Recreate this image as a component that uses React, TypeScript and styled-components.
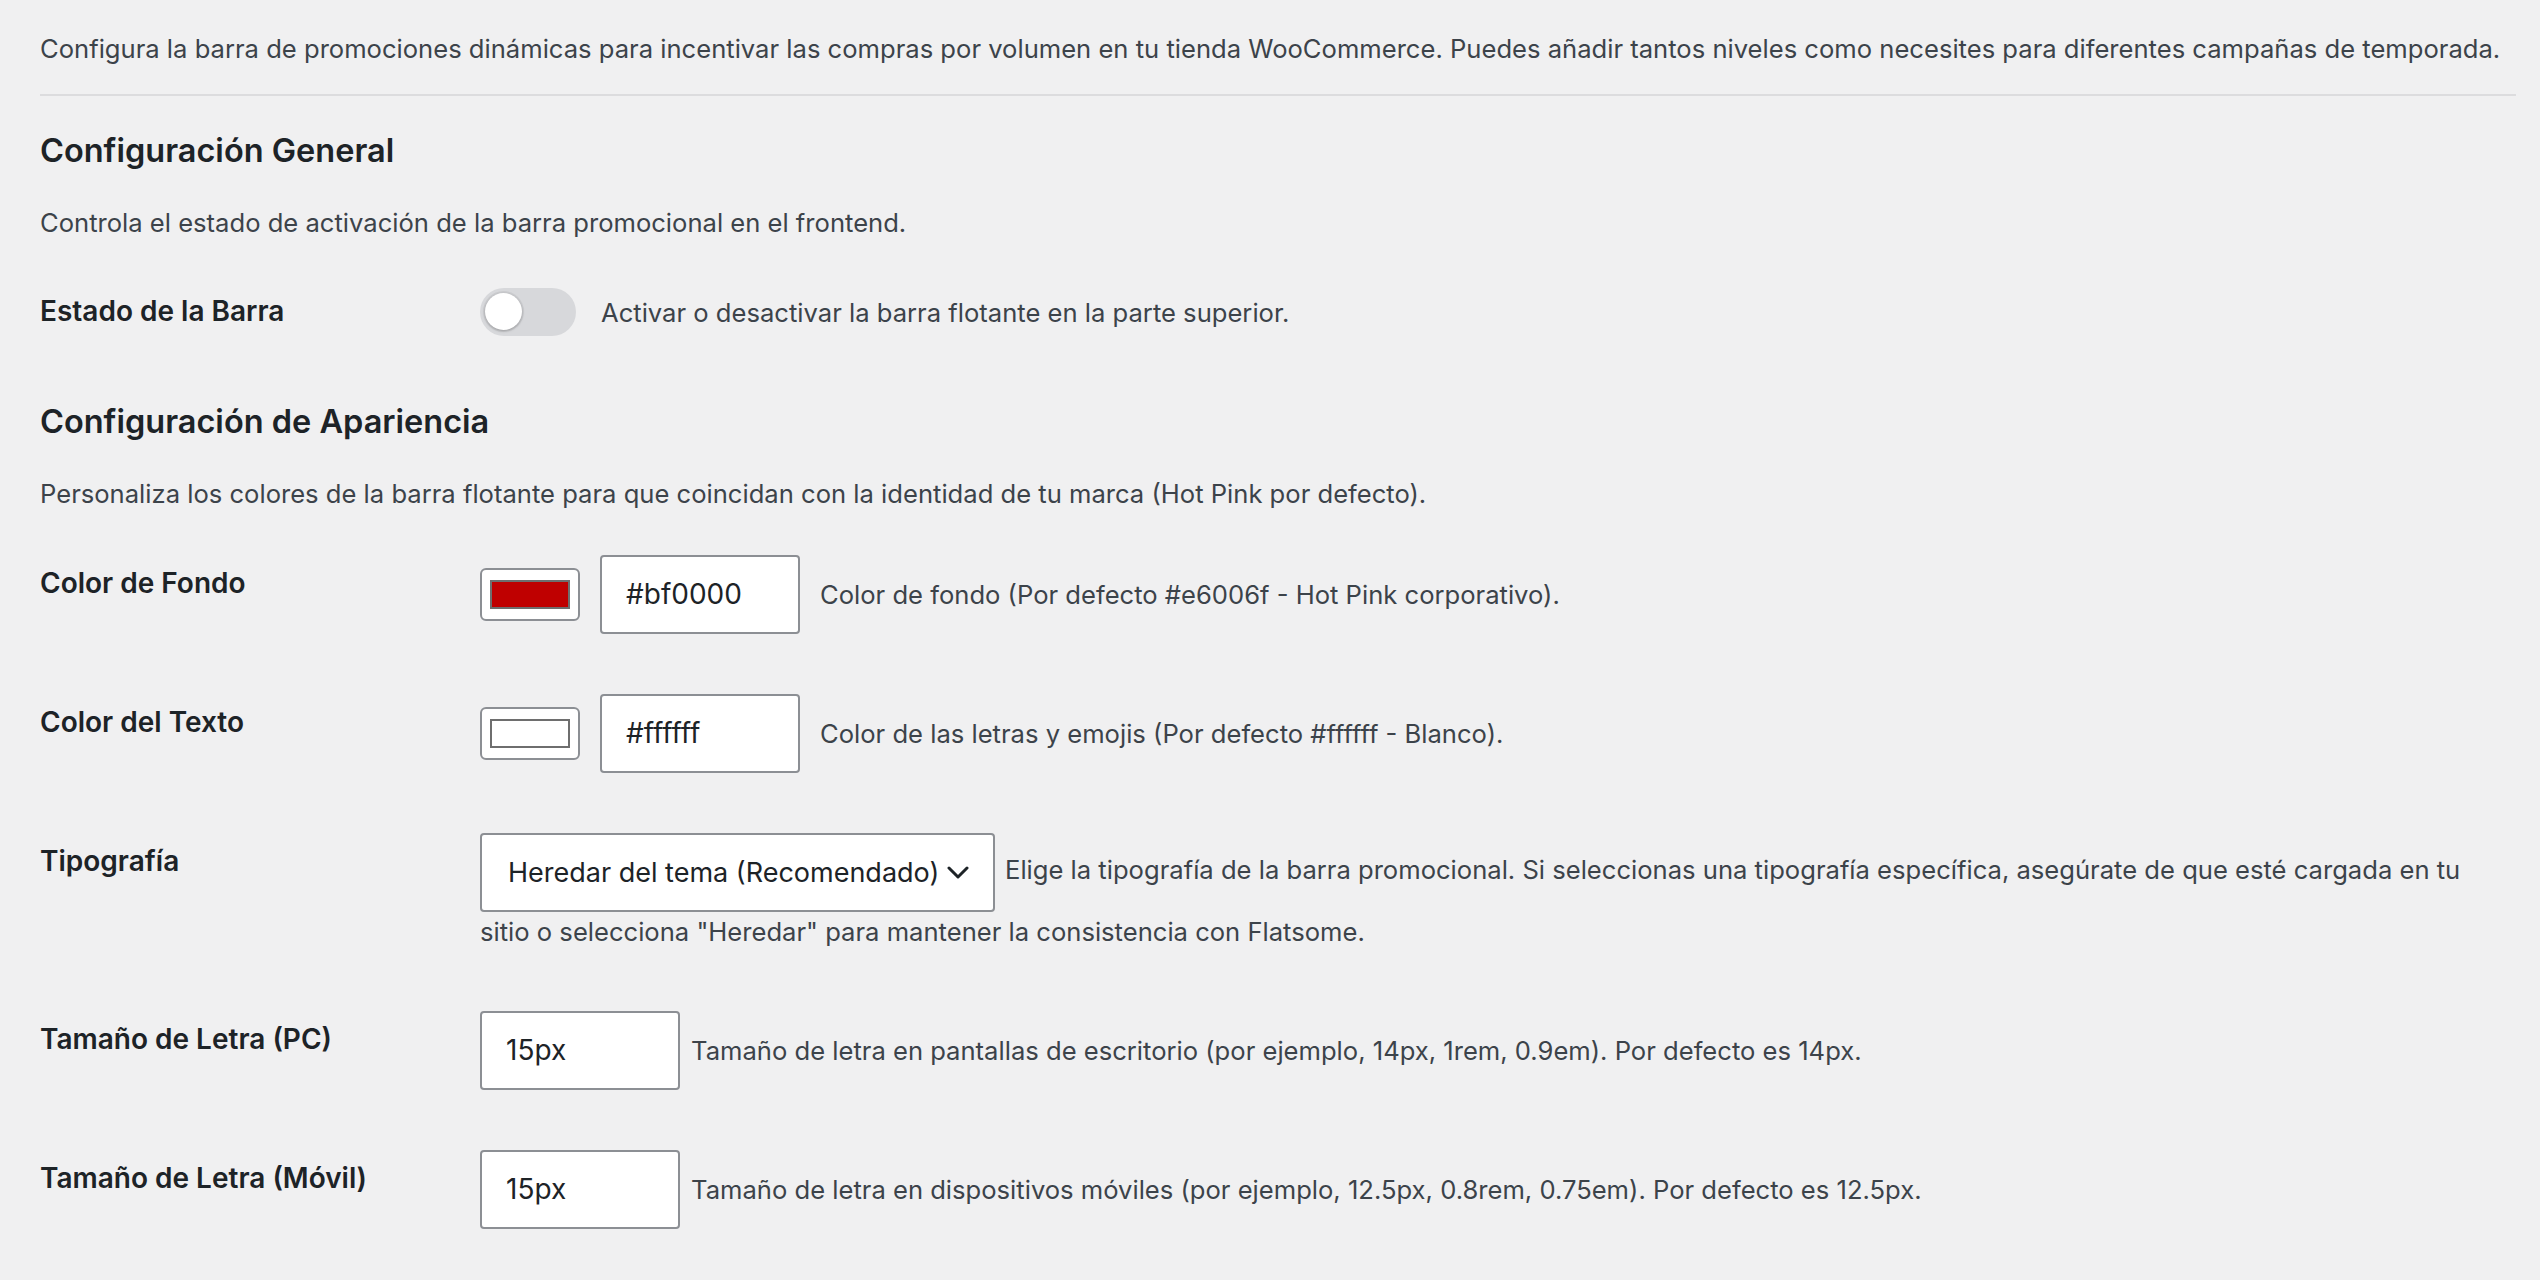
import React from 'react';
import styled, { createGlobalStyle } from 'styled-components';

const GlobalStyle = createGlobalStyle`
  html, body {
    margin: 0;
    padding: 0;
    background: #f0f0f1;
  }
  body {
    font-family: Inter, "Noto Sans", "Liberation Sans", sans-serif;
    color: #3c434a;
    font-size: 25.6px;
  }
  * {
    box-sizing: border-box;
  }
`;

const Page = styled.div`
  padding: 29px 24px 40px 40px;
`;

const Intro = styled.p`
  margin: 0;
  font-size: 25.6px;
  line-height: 39px;
  white-space: nowrap;
`;

const Divider = styled.hr`
  margin: 26px 0 0;
  border: 0;
  border-top: 2px solid #dcdcde;
`;

const SectionTitle = styled.h2<{ $top: number }>`
  margin: ${p => p.$top}px 0 0;
  font-size: 32.5px;
  line-height: 44px;
  font-weight: 600;
  color: #1d2327;
`;

const SectionText = styled.p`
  margin: 30px 0 0;
  font-size: 25.6px;
  line-height: 39px;
`;

const FormTable = styled.div<{ $top: number }>`
  margin-top: ${p => p.$top}px;
  display: grid;
  grid-template-columns: 420px 1fr;
`;

const Label = styled.div`
  padding: 40px 20px 40px 0;
  font-size: 28px;
  line-height: 36px;
  font-weight: 600;
  color: #1d2327;
`;

const Cell = styled.div<{ $padTop?: number }>`
  padding: ${p => p.$padTop ?? 30}px 20px 30px;
  font-size: 25.6px;
  line-height: 39px;
`;

const Inline = styled.div<{ $gap: number }>`
  display: flex;
  align-items: center;
  gap: ${p => p.$gap}px;
`;

const Toggle = styled.span<{ $on?: boolean }>`
  position: relative;
  flex: none;
  width: 96px;
  height: 48px;
  border-radius: 24px;
  background: ${p => (p.$on ? '#2271b1' : '#d7d8db')};

  &::after {
    content: '';
    position: absolute;
    top: 5px;
    left: ${p => (p.$on ? '54px' : '5px')};
    width: 37px;
    height: 37px;
    border-radius: 50%;
    background: #fff;
    box-shadow: 0 0 0 2px rgba(0, 0, 0, 0.05), 0 1px 3px rgba(0, 0, 0, 0.25);
  }
`;

const Swatch = styled.span`
  flex: none;
  width: 100px;
  height: 53px;
  padding: 10px 8px;
  border: 2px solid #8c8f94;
  border-radius: 6px;
  background: #fff;
`;

const SwatchFill = styled.span<{ $color: string }>`
  display: block;
  width: 100%;
  height: 100%;
  border: 2px solid #6e6e6e;
  background: ${p => p.$color};
`;

const TextBox = styled.span`
  flex: none;
  display: inline-flex;
  align-items: center;
  width: 200px;
  height: 79px;
  padding: 0 24px;
  border: 2px solid #8c8f94;
  border-radius: 4px;
  background: #fff;
  color: #1d2327;
  font-size: 28px;
`;

const SelectBox = styled.span`
  display: inline-flex;
  align-items: center;
  gap: 8px;
  vertical-align: middle;
  width: 515px;
  height: 79px;
  margin-right: 10px;
  padding: 0 0 0 26px;
  border: 2px solid #8c8f94;
  border-radius: 4px;
  background: #fff;
  color: #1d2327;
  font-size: 27px;
  line-height: 1;
  white-space: nowrap;
`;

const Chevron = () => (
  <svg width="22" height="13" viewBox="0 0 22 13" fill="none">
    <path d="M2 2l9 9 9-9" stroke="#1d2327" strokeWidth="3" strokeLinecap="round" strokeLinejoin="round" />
  </svg>
);

const ColorField = ({ color, value, hint }: { color: string; value: string; hint: string }) => (
  <Inline $gap={20}>
    <Swatch>
      <SwatchFill $color={color} />
    </Swatch>
    <TextBox>{value}</TextBox>
    <span>{hint}</span>
  </Inline>
);

const App: React.FC = () => (
  <>
    <GlobalStyle />
    <Page>
      <Intro>
        Configura la barra de promociones dinámicas para incentivar las compras por volumen en tu tienda WooCommerce. Puedes añadir tantos niveles como necesites para diferentes campañas de temporada.
      </Intro>
      <Divider />

      <SectionTitle $top={33}>Configuración General</SectionTitle>
      <SectionText>Controla el estado de activación de la barra promocional en el frontend.</SectionText>
      <FormTable $top={11}>
        <Label>Estado de la Barra</Label>
        <Cell $padTop={35}>
          <Inline $gap={25}>
            <Toggle />
            <span>Activar o desactivar la barra flotante en la parte superior.</span>
          </Inline>
        </Cell>
      </FormTable>

      <SectionTitle $top={31}>Configuración de Apariencia</SectionTitle>
      <SectionText>
        Personaliza los colores de la barra flotante para que coincidan con la identidad de tu marca (Hot Pink por defecto).
      </SectionText>
      <FormTable $top={12}>
        <Label>Color de Fondo</Label>
        <Cell>
          <ColorField color="#bf0000" value="#bf0000" hint="Color de fondo (Por defecto #e6006f - Hot Pink corporativo)." />
        </Cell>

        <Label>Color del Texto</Label>
        <Cell>
          <ColorField color="#ffffff" value="#ffffff" hint="Color de las letras y emojis (Por defecto #ffffff - Blanco)." />
        </Cell>

        <Label>Tipografía</Label>
        <Cell>
          <SelectBox>
            <span>Heredar del tema (Recomendado)</span>
            <Chevron />
          </SelectBox>
          Elige la tipografía de la barra promocional. Si seleccionas una tipografía específica, asegúrate de que esté cargada en tu sitio o selecciona "Heredar" para mantener la consistencia con Flatsome.
        </Cell>

        <Label>Tamaño de Letra (PC)</Label>
        <Cell>
          <Inline $gap={11}>
            <TextBox>15px</TextBox>
            <span>Tamaño de letra en pantallas de escritorio (por ejemplo, 14px, 1rem, 0.9em). Por defecto es 14px.</span>
          </Inline>
        </Cell>

        <Label>Tamaño de Letra (Móvil)</Label>
        <Cell>
          <Inline $gap={11}>
            <TextBox>15px</TextBox>
            <span>Tamaño de letra en dispositivos móviles (por ejemplo, 12.5px, 0.8rem, 0.75em). Por defecto es 12.5px.</span>
          </Inline>
        </Cell>
      </FormTable>
    </Page>
  </>
);

export default App;
